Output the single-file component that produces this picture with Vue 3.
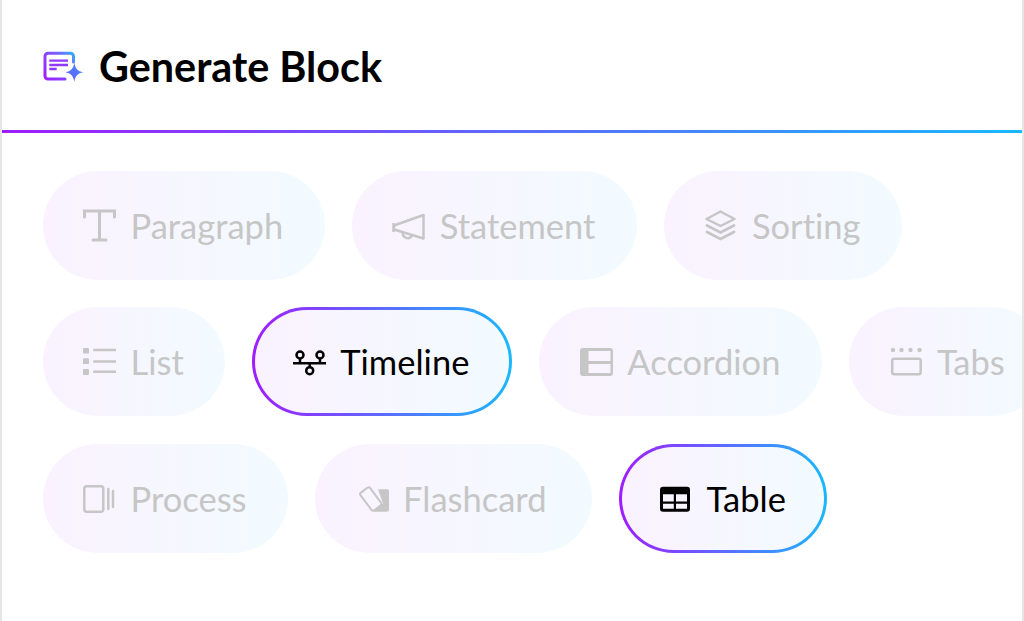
<template>
  <div class="card">
    <header class="head">
      <svg class="logo" viewBox="0 0 42 32" fill="none">
        <defs>
          <linearGradient id="logoLine" x1="2" y1="28" x2="32" y2="2" gradientUnits="userSpaceOnUse">
            <stop offset="0" stop-color="#a01cff" />
            <stop offset="0.65" stop-color="#7a5cff" />
            <stop offset="1" stop-color="#2cb2ff" />
          </linearGradient>
          <linearGradient id="logoStar" x1="24" y1="30" x2="42" y2="14" gradientUnits="userSpaceOnUse">
            <stop offset="0" stop-color="#6a5cff" />
            <stop offset="1" stop-color="#3f8cff" />
          </linearGradient>
        </defs>
        <path d="M23 29H6A3 3 0 0 1 3 26V6.300A3 3 0 0 1 6 3.300H28.500A3 3 0 0 1 31.500 6.300V12" stroke="url(#logoLine)" stroke-width="3" stroke-linecap="round" />
        <path d="M7.300 10.700H26M7.300 15H26M7.300 19H14.700" stroke="#9038ff" stroke-width="2.300" />
        <path d="M32.300 12.800C33.300 18.800 35.500 21.200 41.300 22.300C35.500 23.400 33.300 25.800 32.300 31.800C31.300 25.800 29.100 23.400 23.300 22.300C29.100 21.200 31.300 18.800 32.300 12.800Z" fill="url(#logoStar)" />
      </svg>
      <h1>Generate Block</h1>
    </header>
    <div class="rule"></div>
    <div class="rows">
      <div v-for="(row, i) in rows" :key="i" class="row">
        <div
          v-for="item in row"
          :key="item.label"
          class="chip"
          :class="{ on: item.on }"
          :style="item.pad ? { paddingRight: item.pad + 'px' } : null"
        >
          <svg class="ico" viewBox="0 0 33 33" v-html="item.icon"></svg>
          <span>{{ item.label }}</span>
        </div>
      </div>
    </div>
  </div>
</template>

<script setup>
const stroke = 'fill="none" stroke="currentColor" stroke-width="2.500"'

const rows = [
  [
    {
      label: "Paragraph",
      icon: `<path fill="none" stroke="currentColor" stroke-width="3" stroke-linecap="round" d="M1.500 8V2H31.500V8M16.500 2V31M10 31H23" />`,
    },
    {
      label: "Statement",
      icon: `<path ${stroke} stroke-linejoin="round" d="M31.500 6L2 16.500V20.500L31.500 29.500ZM1.500 14V23" /><path ${stroke} d="M11 23.500A4.800 4.800 0 0 0 20 26.500" />`,
    },
    {
      label: "Sorting",
      icon: `<path ${stroke} stroke-linejoin="round" d="M16.500 2.500L30.500 10L16.500 17L2.500 10Z" /><path fill="none" stroke="currentColor" stroke-width="2.800" stroke-linecap="round" d="M3 16.500L16.500 23.500L30 16.500M3 23L16.500 30L30 23" />`,
    },
  ],
  [
    {
      label: "List",
      icon: `<rect x="0" y="3" width="6" height="5.500" rx="1.200" fill="currentColor"/><rect x="0" y="13.300" width="6" height="5.800" rx="1.200" fill="currentColor"/><rect x="0" y="24" width="6" height="6" rx="1.200" fill="currentColor"/><path ${stroke} d="M10.300 5H33M10.300 16.500H33M10.300 26.800H33" />`,
    },
    {
      label: "Timeline",
      on: true,
      pad: 40,
      icon: `<g ${stroke}><path d="M0 18.300H33M7 13.500V18.300M27 13.500V18.300M16.700 18.300V22.300" /><circle cx="7" cy="10" r="3.500" /><circle cx="27" cy="10" r="3.500" /><circle cx="16.700" cy="25.700" r="3.500" /></g>`,
    },
    {
      label: "Accordion",
      icon: `<path fill="currentColor" fill-rule="evenodd" d="M3 3H30A3 3 0 0 1 33 6V28A3 3 0 0 1 30 31H3A3 3 0 0 1 0 28V6A3 3 0 0 1 3 3ZM8.500 6V16H30.500V6ZM8.500 19V28H30.500V19Z" />`,
    },
    {
      label: "Tabs",
      icon: `<rect x="3.200" y="13.700" width="28.500" height="15.500" rx="2" ${stroke} /><circle cx="4" cy="5" r="2.200" fill="currentColor"/><circle cx="12.500" cy="5" r="2.200" fill="currentColor"/><circle cx="21.500" cy="5" r="2.200" fill="currentColor"/><circle cx="30.500" cy="5" r="2.200" fill="currentColor"/>`,
    },
  ],
  [
    {
      label: "Process",
      icon: `<rect x="1.300" y="4.300" width="19" height="25.500" rx="2.500" ${stroke} /><path ${stroke} stroke-linecap="round" d="M25.300 7V27M30 9V25" />`,
    },
    {
      label: "Flashcard",
      pad: 42,
      icon: `<path fill="currentColor" d="M22 7.300H31A2 2 0 0 1 33 9.300V27.700A2 2 0 0 1 31 29.700H17L27 21.500Z" /><rect x="8.800" y="6" width="12" height="22" rx="2" transform="rotate(-37 14.800 17)" fill="#f8f5fe" stroke="currentColor" stroke-width="2" />`,
    },
    {
      label: "Table",
      on: true,
      icon: `<path fill="currentColor" fill-rule="evenodd" d="M4 4.700H28A3 3 0 0 1 31 7.700V26.700A3 3 0 0 1 28 29.700H4A3 3 0 0 1 1 26.700V7.700A3 3 0 0 1 4 4.700ZM4 12.300V19.500H14.800V12.300ZM17 12.300V19.500H28V12.300ZM4 21.800V26.800H14.800V21.800ZM17 21.800V26.800H28V21.800Z" />`,
    },
  ],
]
</script>

<style>
html,
body {
  margin: 0;
  background: #fff;
}
</style>

<style scoped>
.card {
  box-sizing: border-box;
  width: 1024px;
  height: 621px;
  border-left: 2px solid #e6e6e6;
  border-right: 2px solid #e6e6e6;
  background: #fff;
  overflow: hidden;
  font-family: Lato, "Liberation Sans", sans-serif;
  font-variant-ligatures: none;
}

.head {
  box-sizing: border-box;
  height: 129.5px;
  padding: 3px 0 0 40px;
  display: flex;
  align-items: center;
  gap: 15px;
}

.logo {
  width: 42px;
  height: 32px;
}

.head h1 {
  margin: 0;
  font-size: 41.3px;
  font-weight: 700;
  color: #000;
}

.rule {
  height: 3px;
  background: linear-gradient(90deg, #a01cff, #1ab8ff);
}

.rows {
  padding: 38px 0 0 40.5px;
  display: flex;
  flex-direction: column;
  gap: 27.5px;
}

.row {
  display: flex;
  gap: 27px;
}

.chip {
  box-sizing: border-box;
  flex: none;
  height: 109px;
  padding: 0 38.5px 0 37.5px;
  display: flex;
  align-items: center;
  gap: 14.5px;
  border-radius: 55px;
  border: 3px solid transparent;
  background: linear-gradient(90deg, #faf2ff, #f2fbff);
  background-origin: border-box;
  color: #c6c6c6;
  font-size: 34.5px;
}

.chip.on {
  color: #000;
  background:
    linear-gradient(90deg, #faf2ff, #f2fbff) padding-box,
    linear-gradient(90deg, #a01cff, #1ab8ff) border-box;
}

.ico {
  width: 33px;
  height: 33px;
  flex: none;
}
</style>
